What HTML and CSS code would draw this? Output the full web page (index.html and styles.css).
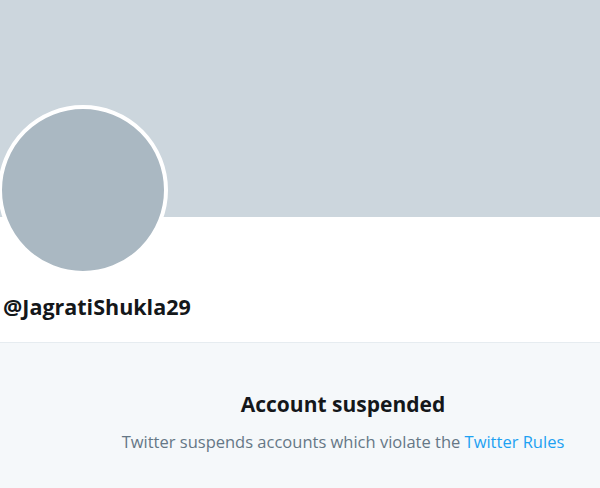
FILE: index.html
```html
<!DOCTYPE html>
<html lang="en">
<head>
  <meta charset="UTF-8" />
  <title>@JagratiShukla29</title>
  <link rel="stylesheet" href="styles.css">
</head>
<body>
  <div class="profile">
    <div class="banner"></div>
    <div class="info">
      <div class="avatar"></div>
      <h2 class="handle">@JagratiShukla29</h2>
    </div>
  </div>

  <div class="notice">
    <h3>Account suspended</h3>
    <p>Twitter suspends accounts which violate the <a href="#">Twitter Rules</a></p>
  </div>
</body>
</html>
```

FILE: styles.css
```css
* {
  margin: 0;
  padding: 0;
  box-sizing: border-box;
  font-family: "Open Sans", sans-serif;
}

html, body {
  height: 100%;
}

body {
  display: flex;
  flex-direction: column;
  background: #ffffff;
  overflow: hidden;
}

.profile {
  flex-shrink: 0;
}

.banner {
  height: 217px;
  background: #ccd6dd;
}

.info {
  display: flex;
  flex-direction: column;
  align-items: flex-start;
  padding: 0 0 0 3px;
  border-bottom: 1px solid #e6ecf0;
  height: 126px;
}

.avatar {
  flex-shrink: 0;
  width: 170px;
  height: 170px;
  margin: -112px 0 0 -5px;
  border-radius: 50%;
  border: 4px solid #ffffff;
  background: #aab8c2;
}

.handle {
  margin-top: 18px;
  font-size: 21.5px;
  font-weight: 700;
  color: #14171a;
  line-height: 28px;
}

.notice {
  flex: 1;
  background: #f5f8fa;
  padding: 47px 0 0 86px;
  text-align: center;
}

.notice h3 {
  font-size: 21px;
  font-weight: 700;
  color: #14171a;
  line-height: 28px;
}

.notice p {
  margin-top: 12px;
  font-size: 16.5px;
  color: #657786;
  line-height: 24px;
}

.notice a {
  color: #1da1f2;
  text-decoration: none;
}
```
